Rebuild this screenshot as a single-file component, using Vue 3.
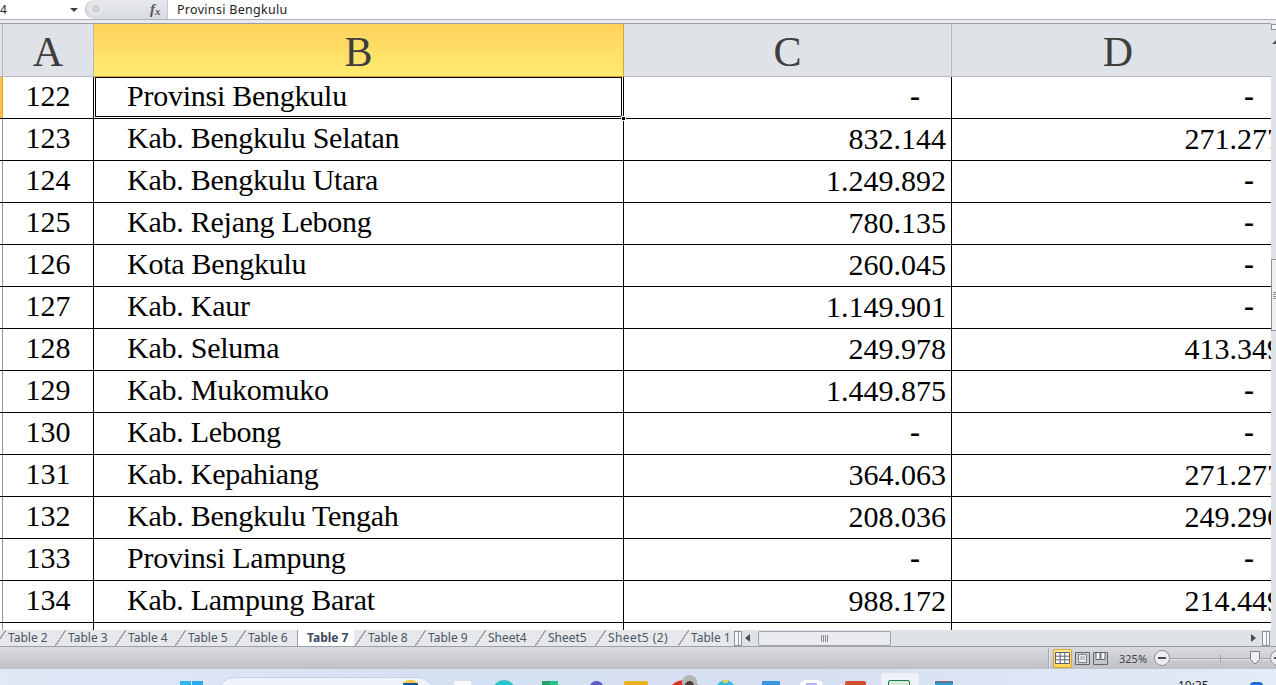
<template>
  <div class="window">
    <div class="formula-bar">
      <div class="name-box">
        <span class="name-text">4</span>
        <span class="name-arrow"></span>
      </div>
      <div class="fx-box">
        <span class="fx-knob"></span>
        <span class="fx">f<sub>x</sub></span>
      </div>
      <div class="formula-text">Provinsi Bengkulu</div>
    </div>
    <div class="bar-gap"></div>

    <div class="sheet-wrap">
      <div class="sheet">
        <div class="head-row">
          <div class="strip strip--head"></div>
          <div class="head col-a">A</div>
          <div class="head head--active col-b">B</div>
          <div class="head col-c">C</div>
          <div class="head col-d">D</div>
        </div>
        <div v-for="(row, i) in rows" :key="row.no" class="row">
          <div class="strip" :class="{ 'strip--active': i === 0 }"></div>
          <div class="cell cell-no col-a">{{ row.no }}</div>
          <div class="cell cell-name col-b">
            {{ row.name }}
            <span v-if="i === 0" class="selection"><span class="handle"></span></span>
          </div>
          <div class="cell cell-num col-c" :class="{ dash: row.c === '-' }">{{ row.c }}</div>
          <div class="cell cell-num col-d" :class="{ dash: row.d === '-' }">{{ row.d }}</div>
        </div>
        <div class="row row--tail">
          <div class="strip"></div>
          <div class="cell col-a"></div>
          <div class="cell col-b"></div>
          <div class="cell col-c"></div>
          <div class="cell col-d"></div>
        </div>
      </div>
      <div class="vscroll">
        <span class="split-v"></span>
        <span class="arrow-up"></span>
        <span class="v-thumb"><i></i></span>
      </div>
    </div>

    <div class="tabs-bar">
      <div class="tabs">
        <div
          v-for="tab in tabs"
          :key="tab"
          class="tab"
          :class="{ 'tab--active': tab === 'Table 7' }"
        >{{ tab }}</div>
      </div>
      <span class="split-h"></span>
      <div class="hscroll">
        <span class="arrow-left"></span>
        <span class="h-thumb"><i></i></span>
        <span class="arrow-right"></span>
      </div>
      <span class="split-h"></span>
    </div>

    <div class="status-bar">
      <span class="status-sep"></span>
      <span class="view view--on">
        <svg width="15" height="12" viewBox="0 0 15 12">
          <path d="M.5.5h14v11H.5zM.5 4.200h14M.5 7.800h14M5.200.5v11M9.800.5v11" fill="#fff" stroke="#59616b" />
        </svg>
      </span>
      <span class="view">
        <svg width="15" height="13" viewBox="0 0 15 13">
          <path d="M.5.5h14v12H.5z" fill="#c9ccd0" stroke="#5f656c" />
          <path d="M3.500 2.500h8v8h-8z" fill="#eceef0" stroke="#7c8187" />
          <path d="M5 5h5M5 7h5" stroke="#9a9ea3" />
        </svg>
      </span>
      <span class="view">
        <svg width="15" height="13" viewBox="0 0 15 13">
          <path d="M.5.5h14v12H.5z" fill="#c4c7cb" stroke="#5f656c" />
          <path d="M3 .5h4v7H3zM8 .5h4v7H8z" fill="#fafafa" stroke="#5f656c" />
        </svg>
      </span>
      <span class="zoom-level">325%</span>
      <span class="zoom-btn"><i></i></span>
      <span class="slider">
        <span class="slider-tick"></span>
        <svg class="slider-thumb" width="10" height="14" viewBox="0 0 10 14">
          <path d="M.5.5h9v8L5 13 .5 8.500z" fill="#eef0f2" stroke="#7d8288" />
        </svg>
      </span>
      <span class="zoom-btn"><i></i></span>
    </div>

    <div class="taskbar">
      <span
        v-for="icon in taskIcons"
        :key="icon.name"
        class="task-icon"
        :class="icon.name"
        :style="{ marginLeft: icon.gap + 'px', width: icon.w + 'px' }"
      ></span>
      <span class="clock">10:35</span>
      <span class="tray"></span>
    </div>
  </div>
</template>

<script setup>
const rows = [
  { no: 122, name: "Provinsi Bengkulu", c: "-", d: "-" },
  { no: 123, name: "Kab. Bengkulu Selatan", c: "832.144", d: "271.277" },
  { no: 124, name: "Kab. Bengkulu Utara", c: "1.249.892", d: "-" },
  { no: 125, name: "Kab. Rejang Lebong", c: "780.135", d: "-" },
  { no: 126, name: "Kota Bengkulu", c: "260.045", d: "-" },
  { no: 127, name: "Kab. Kaur", c: "1.149.901", d: "-" },
  { no: 128, name: "Kab. Seluma", c: "249.978", d: "413.349" },
  { no: 129, name: "Kab. Mukomuko", c: "1.449.875", d: "-" },
  { no: 130, name: "Kab. Lebong", c: "-", d: "-" },
  { no: 131, name: "Kab. Kepahiang", c: "364.063", d: "271.277" },
  { no: 132, name: "Kab. Bengkulu Tengah", c: "208.036", d: "249.296" },
  { no: 133, name: "Provinsi Lampung", c: "-", d: "-" },
  { no: 134, name: "Kab. Lampung Barat", c: "988.172", d: "214.449" },
];

const tabs = [
  "Table 2", "Table 3", "Table 4", "Table 5", "Table 6", "Table 7",
  "Table 8", "Table 9", "Sheet4", "Sheet5", "Sheet5 (2)", "Table 1",
];

// gap = space after the previous icon
const taskIcons = [
  { name: "ic-win", gap: 180, w: 23 },
  { name: "ic-search", gap: 15, w: 216 },
  { name: "ic-white", gap: 20, w: 17 },
  { name: "ic-edge", gap: 22, w: 22 },
  { name: "ic-green", gap: 27, w: 16 },
  { name: "ic-teams", gap: 32, w: 13 },
  { name: "ic-folder", gap: 21, w: 24 },
  { name: "ic-chrome", gap: 22, w: 30 },
  { name: "ic-cyan", gap: 16, w: 19 },
  { name: "ic-blue", gap: 27, w: 18 },
  { name: "ic-paper", gap: 20, w: 23 },
  { name: "ic-red", gap: 22, w: 21 },
  { name: "ic-excel", gap: 15, w: 38 },
  { name: "ic-screen", gap: 16, w: 18 },
];
</script>

<style>
html, body {
  margin: 0;
  height: 100%;
  overflow: hidden;
  background: #fff;
}
</style>

<style scoped>
.window {
  width: 1276px;
  height: 685px;
  display: flex;
  flex-direction: column;
  overflow: hidden;
  font-family: "Noto Sans", sans-serif;
}

/* formula bar */
.formula-bar {
  height: 19px;
  flex: none;
  display: flex;
  background: #fff;
  border-bottom: 1px solid #aeb1b5;
  box-sizing: content-box;
}
.name-box {
  width: 85px;
  flex: none;
  display: flex;
  align-items: center;
  justify-content: space-between;
  box-sizing: border-box;
  padding-right: 7px;
  font-size: 12px;
  color: #222;
}
.name-arrow {
  width: 0;
  height: 0;
  border: 4px solid transparent;
  border-top-color: #444;
  border-bottom: 0;
}
.fx-box {
  width: 83px;
  flex: none;
  position: relative;
  box-sizing: border-box;
  background: linear-gradient(#e6e8ec, #d9dce1);
  border: 1px solid #b9bcc1;
  border-right-color: #c4c7cb;
  border-top: 0;
  border-bottom: 0;
  border-radius: 10px 0 0 10px;
}
.fx-knob {
  position: absolute;
  left: 4px;
  top: 3px;
  width: 12px;
  height: 12px;
  box-sizing: border-box;
  border-radius: 50%;
  background: #cfd1d4;
  border: 2px solid #e8e9eb;
}
.fx {
  position: absolute;
  left: 64px;
  top: 1px;
  font: italic bold 15px/16px "Liberation Serif", serif;
  color: #55585c;
}
.fx sub {
  font-size: 11px;
  line-height: 0;
  vertical-align: -1px;
}
.formula-text {
  padding-left: 9px;
  font-size: 12.500px;
  line-height: 19px;
  color: #222;
  letter-spacing: 0.3px;
}
.bar-gap {
  height: 3px;
  flex: none;
  background: #e9ebee;
}

/* sheet */
.sheet-wrap {
  flex: none;
  height: 607px;
  display: flex;
  overflow: hidden;
}
.sheet {
  width: 1271px;
  flex: none;
  overflow: hidden;
  background: #fff;
  font-family: "Liberation Serif", serif;
  color: #000;
}
.head-row {
  height: 54px;
  display: flex;
  width: 1290px;
  background: #dfe2e7;
  box-sizing: border-box;
  border-top: 1px solid #9a9ea3;
  border-bottom: 1px solid #b8bbbf;
}
.row {
  height: 42px;
  display: flex;
  width: 1290px;
  box-sizing: border-box;
  border-bottom: 1px solid #000;
}
.row--tail {
  border-bottom: 0;
  height: 8px;
}
.strip {
  width: 3px;
  flex: none;
  box-sizing: border-box;
  background: #fff;
  border-right: 1px solid #8f9296;
}
.strip--head {
  background: #dfe2e7;
  border-right: 1px solid #b8bbbf;
}
.strip--active {
  background: #f6c24a;
  border-right: 1px solid #e0a030;
}
.col-a { width: 91px; flex: none; }
.col-b { width: 530px; flex: none; }
.col-c { width: 328px; flex: none; }
.col-d { width: 333px; flex: none; }

.head {
  box-sizing: border-box;
  border-right: 1px solid #b8bbbf;
  text-align: center;
  font-size: 42px;
  line-height: 56px;
  color: #3e3e3e;
}
.head--active {
  background: linear-gradient(#ffd25c, #ffeb70);
  border-right-color: #d9a53a;
  box-shadow: 0 1px 0 #d9a53a;
}
.cell {
  box-sizing: border-box;
  border-right: 1px solid #000;
  font-size: 30px;
  position: relative;
  white-space: nowrap;
}
.cell-no {
  text-align: center;
  line-height: 38px;
}
.cell-name {
  padding-left: 33px;
  line-height: 38px;
  letter-spacing: -0.25px;
}
.cell-num {
  text-align: right;
  padding-right: 5px;
  line-height: 40px;
}
.cell-num.dash {
  padding-right: 31px;
  line-height: 38px;
  font-weight: bold;
}
.col-d.cell-num {
  padding-right: 3px;
  border-right: 0;
}
.col-d.cell-num.dash {
  padding-right: 31px;
}
.selection {
  position: absolute;
  left: 1px;
  top: 0;
  right: 1px;
  bottom: 1px;
  border: 1px solid #000;
  z-index: 2;
}
.handle {
  position: absolute;
  right: -5px;
  bottom: -5px;
  width: 3px;
  height: 3px;
  background: #000;
  border: 1px solid #fff;
}

/* vertical scrollbar */
.vscroll {
  width: 5px;
  flex: none;
  position: relative;
  background: #dfe2e7;
}
.split-v {
  position: absolute;
  left: 0;
  top: 1px;
  width: 5px;
  height: 6px;
  background: #f6f7f8;
  border: 1px solid #8f9296;
  border-right: 0;
  box-sizing: border-box;
}
.arrow-up {
  position: absolute;
  left: 1px;
  top: 17px;
  width: 0;
  height: 0;
  border: 4px solid transparent;
  border-bottom-color: #555;
  border-top: 0;
}
.v-thumb {
  position: absolute;
  left: 0;
  top: 236px;
  width: 5px;
  height: 72px;
  background: #eef0f2;
  border: 1px solid #8f9398;
  border-right: 0;
  box-sizing: border-box;
}
.v-thumb i {
  position: absolute;
  left: 1px;
  top: 32px;
  width: 4px;
  height: 7px;
  background: repeating-linear-gradient(#8b8f94 0 1px, transparent 1px 2px);
}

/* sheet tabs */
.tabs-bar {
  height: 17px;
  flex: none;
  display: flex;
  background: #dfe2e7;
  border-bottom: 1px solid #9da1a6;
  box-sizing: border-box;
}
.tabs {
  width: 734px;
  flex: none;
  display: flex;
  overflow: hidden;
}
.tab {
  position: relative;
  flex: none;
  box-sizing: border-box;
  width: 60px;
  padding-left: 8px;
  font-size: 12px;
  line-height: 16px;
  color: #4c5663;
  background: #e6e8eb;
  white-space: nowrap;
}
.tab::before {
  content: "";
  position: absolute;
  left: -5px;
  top: 0;
  width: 11px;
  height: 16px;
  background: linear-gradient(to top left, transparent 46%, #9aa0a6 46%, #9aa0a6 54%, transparent 54%);
}
.tab:nth-child(5) {
  width: 57px;
}
.tab--active {
  width: 57px;
  background: #fff;
  font-weight: 700;
  color: #3b4a5f;
  padding-left: 9px;
  z-index: 1;
  border-left: 1px solid #9da1a6;
}
.tab--active::before {
  display: none;
}
.tab--active + .tab {
  width: 66px;
  padding-left: 14px;
}
.tab--active + .tab::before {
  left: 1px;
}
.tab:nth-child(11) {
  width: 83px;
  letter-spacing: 0.4px;
}
.split-h {
  width: 8px;
  height: 15px;
  flex: none;
  box-sizing: border-box;
  margin-top: 1px;
  background: linear-gradient(90deg, #f7f8f9 0 3px, #9ea2a7 3px 4px, #f7f8f9 4px);
  border: 1px solid #8f9296;
}
.hscroll {
  width: 520px;
  flex: none;
  display: flex;
  align-items: center;
  box-sizing: border-box;
}
.arrow-left {
  width: 0;
  height: 0;
  margin-left: 3px;
  border: 4px solid transparent;
  border-right: 5px solid #4a4d52;
  border-left: 0;
}
.h-thumb {
  width: 133px;
  height: 15px;
  margin-left: 8px;
  position: relative;
  box-sizing: border-box;
  background: #e9ebee;
  border: 1px solid #9ea2a7;
  border-radius: 2px;
}
.h-thumb i {
  position: absolute;
  left: 62px;
  top: 3px;
  width: 7px;
  height: 7px;
  background: repeating-linear-gradient(90deg, #8b8f94 0 1px, transparent 1px 2px);
}
.arrow-right {
  width: 0;
  height: 0;
  margin-left: 360px;
  border: 4px solid transparent;
  border-left: 5px solid #4a4d52;
  border-right: 0;
}

/* status bar */
.status-bar {
  height: 22px;
  flex: none;
  display: flex;
  align-items: center;
  box-sizing: border-box;
  padding-left: 1048px;
  background: linear-gradient(#d9dbde, #bfc1c5);
}
.status-sep {
  width: 2px;
  height: 20px;
  flex: none;
  background: linear-gradient(90deg, #a6a8ac 0 1px, #e6e7e9 1px);
  margin-right: 3px;
}
.view {
  width: 19px;
  height: 19px;
  flex: none;
  display: flex;
  align-items: center;
  justify-content: center;
  margin-right: -1px;
}
.view--on {
  background: linear-gradient(#ffe88f, #ffd653);
  border: 1px solid #d9a53a;
  border-radius: 2px;
  box-sizing: border-box;
  margin-right: 1px;
}
.zoom-level {
  margin-left: 10px;
  width: 35px;
  flex: none;
  font-size: 11px;
  color: #3c424a;
}
.zoom-btn {
  width: 16px;
  height: 16px;
  flex: none;
  box-sizing: border-box;
  position: relative;
  border-radius: 50%;
  border: 1px solid #8e9297;
  background: #eceef0;
}
.zoom-btn i {
  position: absolute;
  left: 3px;
  top: 6px;
  width: 8px;
  height: 2px;
  background: #4a4d52;
}
.slider {
  width: 100px;
  height: 1px;
  flex: none;
  position: relative;
  background: #9da0a4;
  box-shadow: 0 1px 0 #e2e3e5;
}
.slider-tick {
  position: absolute;
  left: 50px;
  top: -3px;
  width: 1px;
  height: 7px;
  background: #9da0a4;
}
.slider-thumb {
  position: absolute;
  left: 80px;
  top: -7px;
}

/* taskbar, only the top of the icons is in the picture */
.taskbar {
  flex: 1;
  min-height: 0;
  display: flex;
  overflow: hidden;
  background: linear-gradient(90deg, #e0e9f6, #d5e0f3 35%, #d6dff1 60%, #e2ecf7);
}
.task-icon {
  flex: none;
  height: 20px;
  margin-top: 12px;
  position: relative;
}
.ic-win { background: linear-gradient(90deg, #35b5f0 0 48%, transparent 48% 52%, #2fa7ea 52%); }
.ic-search {
  margin-top: 8px;
  background: #eef3fb;
  border: 1px solid #c7d1e6;
  border-radius: 16px 16px 0 0;
  box-sizing: border-box;
}
.ic-search::after {
  content: "";
  position: absolute;
  left: 184px;
  top: 2px;
  width: 15px;
  height: 8px;
  background: linear-gradient(#f2c94c 0 3px, #1d4f91 3px);
  border-radius: 50% 50% 0 0;
}
.ic-white { background: #f8f9fb; }
.ic-edge { margin-top: 11px; border-radius: 50%; background: #2cc3c8; }
.ic-green { background: linear-gradient(90deg, #1fa56b 50%, #2bc38a 50%); }
.ic-teams { background: #5b5fc7; border-radius: 6px 6px 0 0; }
.ic-folder { background: #e8b020; border-radius: 2px 2px 0 0; }
.ic-chrome { margin-top: 11px; border-radius: 50%; background: #d93025; }
.ic-chrome::after {
  content: "";
  position: absolute;
  left: 12px;
  top: -5px;
  width: 15px;
  height: 15px;
  border-radius: 50%;
  background: radial-gradient(circle at 50% 70%, #4a3f3c 0 4px, #b5b5b5 5px);
}
.ic-cyan { margin-top: 11px; border-radius: 50%; background: #32b8e6; }
.ic-cyan::after {
  content: "";
  position: absolute;
  left: 7px;
  top: 0;
  width: 5px;
  height: 3px;
  background: #f2c94c;
}
.ic-blue { background: #3a96dd; }
.ic-paper { margin-top: 11px; background: #fff; border-radius: 6px 6px 0 0; }
.ic-paper::after {
  content: "";
  position: absolute;
  left: 6px;
  top: 3px;
  width: 11px;
  height: 6px;
  background: #b7b4ea;
}
.ic-red { background: linear-gradient(#d0492f, #e26b4d); border-radius: 2px 2px 0 0; }
.ic-excel {
  margin-top: 4px;
  height: 24px;
  background: #eef2f8;
  border-radius: 3px 3px 0 0;
}
.ic-excel::after {
  content: "";
  position: absolute;
  left: 7px;
  top: 7px;
  width: 22px;
  height: 10px;
  box-sizing: border-box;
  background: #d4ecd9;
  border: 1px solid #1f7a45;
  border-radius: 2px 2px 0 0;
}
.ic-screen { background: #2a9fd8; border-top: 2px solid #6b7884; box-sizing: border-box; }
.clock {
  margin-left: 225px;
  margin-top: 9px;
  font-size: 12px;
  line-height: 16px;
  color: #1d1f24;
}
.tray {
  width: 13px;
  height: 12px;
  margin-left: 41px;
  margin-top: 13px;
  border-radius: 4px 4px 0 0;
  background: #1f6fd0;
}
</style>
